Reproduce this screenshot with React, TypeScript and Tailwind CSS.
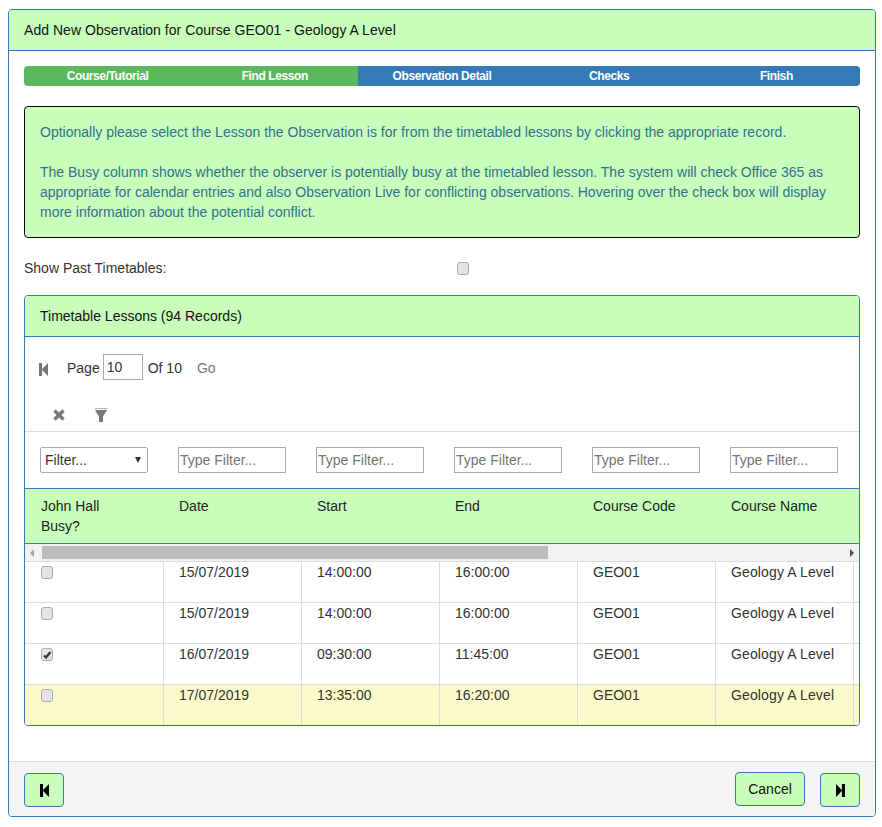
const rows = [
    { date: '15/07/2019', start: '14:00:00', end: '16:00:00', checked: false, hl: false },
    { date: '15/07/2019', start: '14:00:00', end: '16:00:00', checked: false, hl: false },
    { date: '16/07/2019', start: '09:30:00', end: '11:45:00', checked: true, hl: false },
    { date: '17/07/2019', start: '13:35:00', end: '16:20:00', checked: false, hl: true },
];

function StepBack({ className }: { className: string }) {
    return (
        <svg viewBox="0 0 10 13" className={className} fill="currentColor" preserveAspectRatio="none">
            <rect x="0" y="0" width="3.4" height="13" />
            <path d="M3 6.5 L10 0 V13 Z" />
        </svg>
    );
}

function StepForward({ className }: { className: string }) {
    return (
        <svg viewBox="0 0 10 13" className={className} fill="currentColor" preserveAspectRatio="none">
            <rect x="6.6" y="0" width="3.4" height="13" />
            <path d="M7 6.5 L0 0 V13 Z" />
        </svg>
    );
}

function Check({ checked }: { checked?: boolean }) {
    return (
        <span className="relative block w-[12px] h-[13px] rounded-[3px] border border-[#ababab] bg-[#e4e4e4]">
            {checked && (
                <svg viewBox="0 0 12 13" className="absolute left-[-1px] top-[-1px] w-[12px] h-[13px] text-[#3a3a3a]" fill="none" stroke="currentColor" strokeWidth="2.4">
                    <path d="M3 7.5 L5 9.5 L9.5 4" />
                </svg>
            )}
        </span>
    );
}

function FilterBox() {
    return (
        <div className="w-[108px] h-[26px] border border-[#a9a9a9] pl-[1px] flex items-center text-[#757575]">Type Filter...</div>
    );
}

export default function App() {
    return (
        <div className="min-h-screen bg-white px-[8px] pt-[9px] text-[14px] leading-[20px] text-[#333] font-['Liberation_Sans',Arial,sans-serif]">
            <div className="w-[868px] h-[808px] flex flex-col border border-[#337ab7] rounded-[4px] overflow-hidden">
                <div className="h-[41px] shrink-0 bg-[#c8ffba] border-b border-[#337ab7] pl-[15px] flex items-center text-[#111] tracking-[0.04px]">
                    Add New Observation for Course GEO01 - Geology A Level
                </div>

                <div className="flex-1 px-[15px] pt-[15px]">
                    <div className="h-[20px] flex rounded-[4px] overflow-hidden text-[12px] font-bold text-white tracking-[-0.4px]">
                        <div className="w-[20%] bg-[#5cb85c] flex items-center justify-center">Course/Tutorial</div>
                        <div className="w-[20%] bg-[#5cb85c] flex items-center justify-center">Find Lesson</div>
                        <div className="w-[20%] bg-[#337ab7] flex items-center justify-center">Observation Detail</div>
                        <div className="w-[20%] bg-[#337ab7] flex items-center justify-center">Checks</div>
                        <div className="w-[20%] bg-[#337ab7] flex items-center justify-center">Finish</div>
                    </div>

                    <div className="mt-[20px] h-[132px] bg-[#c8ffba] border border-black rounded-[4px] p-[15px] text-[#31708f]">
                        <p>Optionally please select the Lesson the Observation is for from the timetabled lessons by clicking the appropriate record.</p>
                        <p className="mt-[20px]">The Busy column shows whether the observer is potentially busy at the timetabled lesson. The system will check Office 365 as appropriate for calendar entries and also Observation Live for conflicting observations. Hovering over the check box will display more information about the potential conflict.</p>
                    </div>

                    <div className="mt-[20px] h-[20px] flex items-center">
                        <span className="w-[433px]">Show Past Timetables:</span>
                        <Check />
                    </div>

                    <div className="mt-[17px] h-[431px] border border-[#337ab7] rounded-[4px] overflow-hidden shadow-[0_1px_1px_rgba(0,0,0,0.05)]">
                        <div className="h-[41px] bg-[#c8ffba] border-b border-[#337ab7] pl-[15px] flex items-center text-[#111]">
                            Timetable Lessons (94 Records)
                        </div>

                        <div className="h-[95px] border-b border-[#ddd]">
                            <div className="h-[62px] pl-[14px] pt-[17px] flex items-start">
                                <StepBack className="w-[9px] h-[13px] mt-[9px] text-[#777]" />
                                <span className="ml-[19px] mt-[4px]">Page</span>
                                <div className="ml-[3px] w-[40px] h-[26px] border border-[#a9a9a9] pl-[3px] flex items-center">10</div>
                                <span className="ml-[5px] mt-[4px]">Of 10</span>
                                <span className="ml-[15px] mt-[4px] text-[#777]">Go</span>
                            </div>
                            <div className="pl-[28px] pt-[9px] flex items-center">
                                <svg viewBox="0 0 12 12" className="w-[12px] h-[12px] text-[#777]" fill="none" stroke="currentColor" strokeWidth="3.4">
                                    <path d="M1.5 1.5 L10.5 10.5 M10.5 1.5 L1.5 10.5" />
                                </svg>
                                <svg viewBox="0 0 12 14" className="ml-[30px] w-[12px] h-[14px] text-[#777]" fill="currentColor">
                                    <rect x="0" y="0" width="12" height="1" opacity="0.6" />
                                    <path d="M0 2 H12 L8 8.5 V14 H4 V8.5 Z" />
                                </svg>
                            </div>
                        </div>

                        <div className="h-[57px] border-b border-[#337ab7] pl-[15px] pt-[15px] flex gap-[30px]">
                            <div className="w-[108px] h-[26px] border border-[#a9a9a9] rounded-[2px] pl-[4px] pr-[6px] flex items-center justify-between">
                                <span>Filter...</span>
                                <span className="w-0 h-0 border-x-[3.5px] border-x-transparent border-t-[6px] border-t-[#333]"></span>
                            </div>
                            <FilterBox />
                            <FilterBox />
                            <FilterBox />
                            <FilterBox />
                            <FilterBox />
                        </div>

                        <div className="h-[55px] bg-[#c8ffba] border-b border-[#337ab7] pt-[7px] grid grid-cols-[154px_138px_138px_138px_138px_130px] text-[#222]">
                            <div className="pl-[16px]">John Hall<br />Busy?</div>
                            <div>Date</div>
                            <div>Start</div>
                            <div>End</div>
                            <div>Course Code</div>
                            <div>Course Name</div>
                        </div>

                        <div className="h-[17px] bg-[#f1f1f1] flex items-center">
                            <span className="ml-[5px] w-0 h-0 border-y-[4px] border-y-transparent border-r-[4px] border-r-[#a3a3a3]"></span>
                            <div className="ml-[8px] w-[506px] h-[13px] bg-[#bdbdbd]"></div>
                            <span className="ml-auto mr-[5px] w-0 h-0 border-y-[4px] border-y-transparent border-l-[4px] border-l-[#505050]"></span>
                        </div>

                        {rows.map((r, i) => (
                            <div key={i} className={`h-[41px] border-t border-[#ddd] grid grid-cols-[138px_138px_138px_138px_138px_138px_1fr] pl-[1px] ${r.hl ? 'bg-[#fcfaca]' : 'bg-white'}`}>
                                <div className="pl-[15px] pt-[4px] border-r border-[#ddd]"><Check checked={r.checked} /></div>
                                <div className="pl-[15px] border-r border-[#ddd]">{r.date}</div>
                                <div className="pl-[15px] border-r border-[#ddd]">{r.start}</div>
                                <div className="pl-[15px] border-r border-[#ddd]">{r.end}</div>
                                <div className="pl-[15px] border-r border-[#ddd]">GEO01</div>
                                <div className="pl-[15px] border-r border-[#ddd] whitespace-nowrap tracking-[0.13px]">Geology A Level</div>
                                <div></div>
                            </div>
                        ))}
                    </div>
                </div>

                <div className="h-[55px] shrink-0 bg-[#f4f4f4] border-t border-[#ddd] px-[15px] pt-[10px] flex items-start">
                    <button className="w-[40px] h-[34px] mt-[1px] bg-[#c8ffba] border border-[#337ab7] rounded-[4px] flex items-center justify-center text-black">
                        <StepBack className="w-[9px] h-[13px]" />
                    </button>
                    <button className="ml-auto w-[70px] h-[34px] bg-[#c8ffba] border border-[#337ab7] rounded-[4px] text-[#111]">Cancel</button>
                    <button className="ml-[15px] w-[40px] h-[34px] mt-[1px] bg-[#c8ffba] border border-[#337ab7] rounded-[4px] flex items-center justify-center text-black">
                        <StepForward className="w-[9px] h-[13px]" />
                    </button>
                </div>
            </div>
        </div>
    );
}
